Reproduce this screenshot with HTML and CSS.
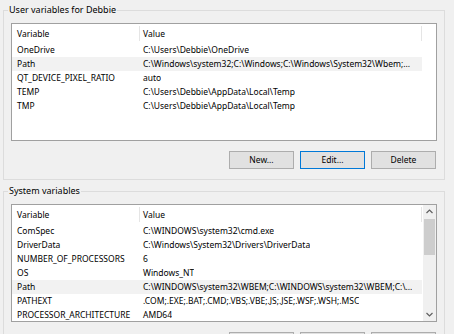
FILE: index.html
```html
<!DOCTYPE html>
<html>
<head>
<meta charset="utf-8">
<link rel="stylesheet" href="styles.css">
</head>
<body>
<div class="window">
  <fieldset class="group">
    <legend class="group-title">User variables for Debbie</legend>
    <div class="list">
      <div class="list-main">
        <div class="list-header">
          <div class="hcol hcol-name">Variable</div>
          <div class="hcol hcol-value">Value</div>
        </div>
        <div class="list-rows">
          <div class="row"><span class="c-name">OneDrive</span><span class="c-value">C:\Users\Debbie\OneDrive</span></div>
          <div class="row row-sel"><span class="c-name">Path</span><span class="c-value">C:\Windows\system32;C:\Windows;C:\Windows\System32\Wbem;...</span></div>
          <div class="row"><span class="c-name">QT_DEVICE_PIXEL_RATIO</span><span class="c-value">auto</span></div>
          <div class="row"><span class="c-name">TEMP</span><span class="c-value">C:\Users\Debbie\AppData\Local\Temp</span></div>
          <div class="row"><span class="c-name">TMP</span><span class="c-value">C:\Users\Debbie\AppData\Local\Temp</span></div>
        </div>
      </div>
    </div>
    <div class="buttons">
      <button class="btn">New...</button>
      <button class="btn btn-focus">Edit...</button>
      <button class="btn">Delete</button>
    </div>
  </fieldset>

  <fieldset class="group group-system">
    <legend class="group-title">System variables</legend>
    <div class="list list-system">
      <div class="list-main">
        <div class="list-header">
          <div class="hcol hcol-name">Variable</div>
          <div class="hcol hcol-value">Value</div>
        </div>
        <div class="list-rows">
          <div class="row"><span class="c-name">ComSpec</span><span class="c-value">C:\WINDOWS\system32\cmd.exe</span></div>
          <div class="row"><span class="c-name">DriverData</span><span class="c-value">C:\Windows\System32\Drivers\DriverData</span></div>
          <div class="row"><span class="c-name">NUMBER_OF_PROCESSORS</span><span class="c-value">6</span></div>
          <div class="row"><span class="c-name">OS</span><span class="c-value">Windows_NT</span></div>
          <div class="row row-sel"><span class="c-name">Path</span><span class="c-value">C:\WINDOWS\system32\WBEM;C:\WINDOWS\system32\WBEM;C:\...</span></div>
          <div class="row"><span class="c-name">PATHEXT</span><span class="c-value">.COM;.EXE;.BAT;.CMD;.VBS;.VBE;.JS;.JSE;.WSF;.WSH;.MSC</span></div>
          <div class="row"><span class="c-name">PROCESSOR_ARCHITECTURE</span><span class="c-value">AMD64</span></div>
        </div>
      </div>
      <div class="scrollbar">
        <div class="sb-arrow">
          <svg width="7" height="5" viewBox="0 0 7 5"><path d="M0.5 4 L3.5 1 L6.5 4" fill="none" stroke="#606060" stroke-width="1.2"/></svg>
        </div>
        <div class="sb-track">
          <div class="sb-thumb"></div>
        </div>
        <div class="sb-arrow">
          <svg width="7" height="5" viewBox="0 0 7 5"><path d="M0.5 1 L3.5 4 L6.5 1" fill="none" stroke="#606060" stroke-width="1.2"/></svg>
        </div>
      </div>
    </div>
    <div class="buttons">
      <button class="btn">New...</button>
      <button class="btn">Edit...</button>
      <button class="btn">Delete</button>
    </div>
  </fieldset>
</div>
</body>
</html>
```

FILE: styles.css
```css
html, body {
  margin: 0;
  padding: 0;
  background: #f0f0f0;
  overflow: hidden;
}
body {
  font-family: "Noto Sans", "Open Sans", sans-serif;
  font-size: 8.5px;
  color: #000;
}
.window {
  padding: 3px 9px 0 3px;
}
.group {
  margin: 0;
  padding: 6px 7px 10px 7px;
  border: 1px solid #dcdcdc;
  min-width: 0;
}
.group-system {
  margin-top: 4px;
}
.group-title {
  margin-left: -3px;
  padding: 0 1px;
  line-height: 14px;
  height: 14px;
  font-size: 9px;
  color: #000;
}
.list {
  display: flex;
  height: 118px;
  box-sizing: border-box;
  border: 1px solid #a0a0a0;
  background: #fff;
  overflow: hidden;
}
.list-main {
  flex: 1;
  min-width: 0;
  overflow: hidden;
}
.list-header {
  display: flex;
  height: 19px;
  align-items: center;
}
.hcol {
  height: 15px;
  line-height: 15px;
  white-space: nowrap;
  box-sizing: border-box;
}
.hcol-name {
  width: 128px;
  padding-left: 5px;
  border-right: 1px solid #e5e5e5;
}
.hcol-value {
  width: 282px;
  padding-left: 3px;
  border-right: 1px solid #e5e5e5;
}
.row {
  display: flex;
  height: 14px;
  line-height: 14px;
  white-space: nowrap;
  width: 410px;
}
.row-sel {
  background: #f2f2f2;
}
.c-name {
  width: 128px;
  padding-left: 5px;
  box-sizing: border-box;
  flex: none;
  overflow: hidden;
}
.c-value {
  padding-left: 3px;
  overflow: hidden;
}
.buttons {
  display: flex;
  justify-content: flex-end;
  gap: 6px;
  margin-top: 10px;
  margin-right: 1px;
}
.btn {
  width: 65px;
  height: 18px;
  box-sizing: border-box;
  background: #e1e1e1;
  border: 1px solid #adadad;
  border-radius: 0;
  font-family: inherit;
  font-size: 8.5px;
  color: #000;
  padding: 0;
  line-height: 16px;
}
.btn-focus {
  border-color: #0078d7;
}
.scrollbar {
  width: 13px;
  flex: none;
  display: flex;
  flex-direction: column;
  background: #f0f0f0;
}
.sb-arrow {
  height: 13px;
  display: flex;
  align-items: center;
  justify-content: center;
  flex: none;
}
.sb-track {
  flex: 1;
  padding: 1px 1px 0 1px;
}
.sb-thumb {
  height: 36px;
  background: #cdcdcd;
}
```
